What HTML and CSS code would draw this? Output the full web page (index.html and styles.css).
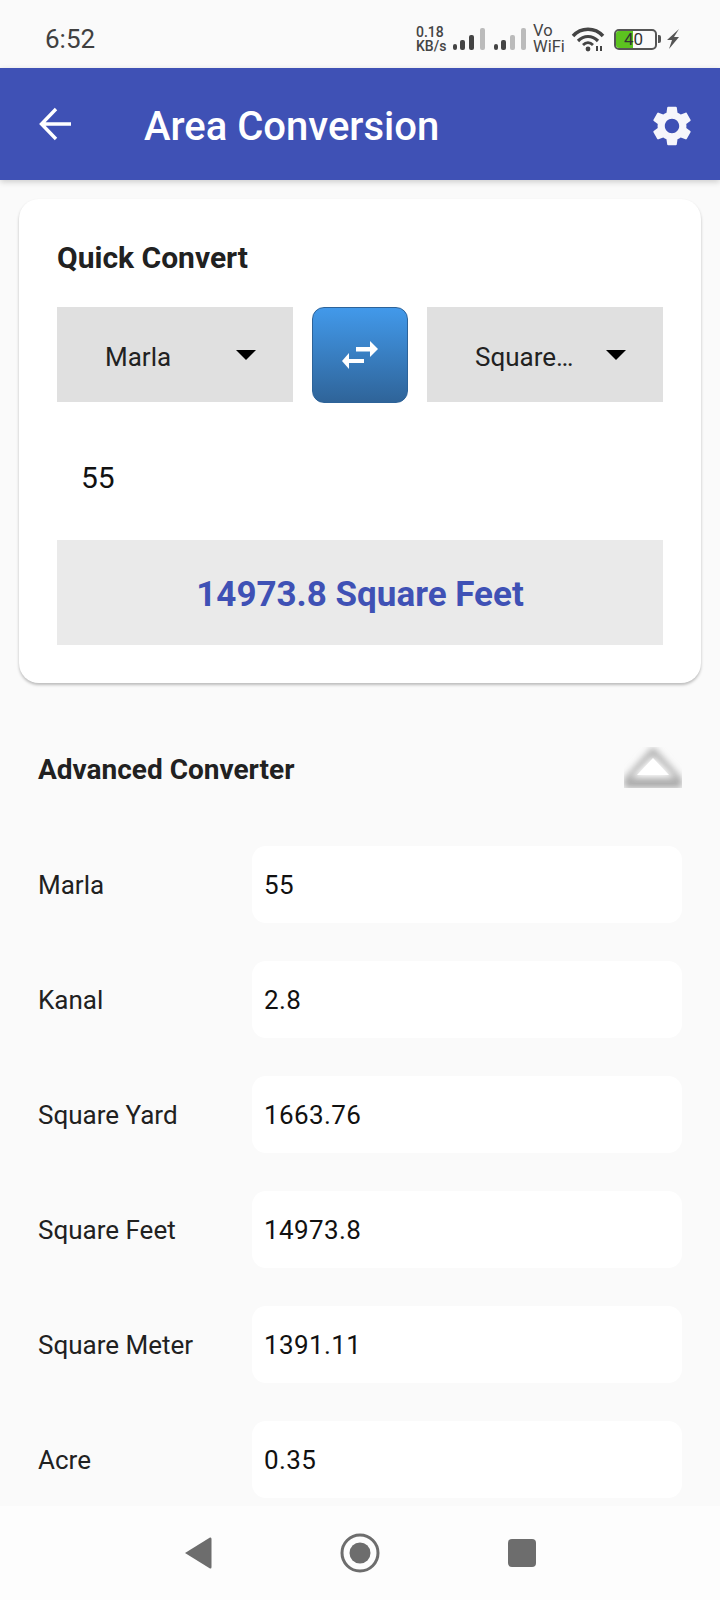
FILE: index.html
```html
<!DOCTYPE html>
<html lang="en">
  <head>
    <meta charset="UTF-8" />
    <meta name="viewport" content="width=device-width, initial-scale=1.0" />
    <title>Area Conversion</title>
    <link rel="stylesheet" href="styles.css">
  </head>
  <body>
    <div class="statusbar">
      <span class="time">6:52</span>
      <div class="status-icons">
        <div class="speed"><span>0.18</span><span>KB/s</span></div>
        <svg class="signal" width="33" height="24" viewBox="0 0 33 24">
          <rect x="0" y="17" width="4" height="6" rx="2" fill="#444" />
          <rect x="7" y="13" width="5" height="10" rx="2" fill="#444" />
          <rect x="16" y="8" width="5" height="15" rx="2" fill="#444" />
          <rect x="27" y="1" width="5" height="22" rx="2" fill="#bbb" />
        </svg>
        <svg class="signal signal-last" width="33" height="24" viewBox="0 0 33 24">
          <rect x="0" y="17" width="4" height="6" rx="2" fill="#444" />
          <rect x="7" y="13" width="5" height="10" rx="2" fill="#444" />
          <rect x="16" y="8" width="5" height="15" rx="2" fill="#bbb" />
          <rect x="27" y="1" width="5" height="22" rx="2" fill="#bbb" />
        </svg>
        <div class="vowifi"><span>Vo</span><span>WiFi</span></div>
        <svg class="wifi" width="34" height="26" viewBox="0 0 34 26">
          <path d="M2 10 C10 1 24 1 32 10" fill="none" stroke="#444" stroke-width="3.4" />
          <path d="M7 15 C13 9 21 9 27 15" fill="none" stroke="#444" stroke-width="3.2" />
          <path d="M12 19 C15 16 19 16 22 19" fill="none" stroke="#444" stroke-width="2.8" />
          <circle cx="17" cy="23" r="2.4" fill="#444" />
          <path d="M25 20 h2 v5 h-2 z M29 20 h2 v5 h-2 z" fill="#444" />
        </svg>
        <div class="battery">
          <div class="battery-body">
            <div class="battery-fill"></div>
            <span class="battery-level">40</span>
          </div>
          <div class="battery-nub"></div>
        </div>
        <svg class="bolt" width="14" height="20" viewBox="0 0 14 20">
          <path d="M13 0 L1 11 H6 L3 20 L13 8 H8 Z" fill="#555" />
        </svg>
      </div>
    </div>

    <div class="appbar">
      <svg class="back" width="34" height="34" viewBox="0 0 34 34">
        <path d="M32 17 H3 M17 2 L2.5 17 L17 32" fill="none" stroke="#fff" stroke-width="3.4" />
      </svg>
      <h1>Area Conversion</h1>
      <svg class="gear" width="48" height="48" viewBox="0 0 24 24">
        <path fill="#f6f6fb" d="M19.14 12.94c.04-.3.06-.61.06-.94 0-.32-.02-.64-.07-.94l2.03-1.58c.18-.14.23-.41.12-.61l-1.92-3.32c-.12-.22-.37-.29-.59-.22l-2.39.96c-.5-.38-1.03-.7-1.62-.94l-.36-2.54c-.04-.24-.24-.41-.48-.41h-3.84c-.24 0-.43.17-.47.41l-.36 2.54c-.59.24-1.13.57-1.62.94l-2.39-.96c-.22-.08-.47 0-.59.22L2.74 8.87c-.12.21-.08.47.12.61l2.03 1.58c-.05.3-.09.63-.09.94s.02.64.07.94l-2.03 1.58c-.18.14-.23.41-.12.61l1.92 3.32c.12.22.37.29.59.22l2.39-.96c.5.38 1.03.7 1.62.94l.36 2.54c.05.24.24.41.48.41h3.84c.24 0 .44-.17.47-.41l.36-2.54c.59-.24 1.13-.56 1.62-.94l2.39.96c.22.08.47 0 .59-.22l1.92-3.32c.12-.22.07-.47-.12-.61l-2.01-1.58zM12 15.6c-1.98 0-3.6-1.62-3.6-3.6s1.62-3.6 3.6-3.6 3.6 1.62 3.6 3.6-1.62 3.6-3.6 3.6z" />
      </svg>
    </div>

    <div class="content">
      <div class="card">
        <h2>Quick Convert</h2>
        <div class="convert-row">
          <div class="select">
            <span class="select-text">Marla</span>
            <span class="caret"></span>
          </div>
          <div class="swap">
            <svg width="36" height="28" viewBox="0 0 36 28">
              <path d="M14 6 H28 V0 L36 8 L28 16 V10.5 H14 Z M22 18 H7 V12 L0 20 L7 28 V22 H22 Z" fill="#fff" />
            </svg>
          </div>
          <div class="select">
            <span class="select-text">Square…</span>
            <span class="caret"></span>
          </div>
        </div>
        <div class="amount">55</div>
        <div class="result">14973.8 Square Feet</div>
      </div>

      <div class="advanced">
        <div class="advanced-head">
          <h3>Advanced Converter</h3>
          <svg class="collapse" width="58" height="41" viewBox="0 0 58 41">
            <defs>
              <filter id="soft" x="-20%" y="-20%" width="140%" height="140%">
                <feGaussianBlur stdDeviation="3.5" />
              </filter>
              <clipPath id="box"><rect width="58" height="41" /></clipPath>
            </defs>
            <g clip-path="url(#box)">
              <path d="M29 0 L58 32 V41 H0 V32 Z" fill="#a8a8a8" filter="url(#soft)" />
              <path d="M29 8 L52 31 H6 Z" fill="#fff" filter="url(#soft)" />
              <path d="M29 11 L45 28 H13 Z" fill="#fff" />
            </g>
          </svg>
        </div>
        <div class="unit-row"><span class="unit-name">Marla</span><div class="unit-value">55</div></div>
        <div class="unit-row"><span class="unit-name">Kanal</span><div class="unit-value">2.8</div></div>
        <div class="unit-row"><span class="unit-name">Square Yard</span><div class="unit-value">1663.76</div></div>
        <div class="unit-row"><span class="unit-name">Square Feet</span><div class="unit-value">14973.8</div></div>
        <div class="unit-row"><span class="unit-name">Square Meter</span><div class="unit-value">1391.11</div></div>
        <div class="unit-row"><span class="unit-name">Acre</span><div class="unit-value">0.35</div></div>
      </div>
    </div>

    <div class="navbar">
      <svg width="28" height="34" viewBox="0 0 28 34">
        <path d="M26 1.5 Q27.5 1 27.5 3 V31 Q27.5 33 26 32.5 L1 17 Z" fill="#6d6d6d" />
      </svg>
      <svg width="40" height="40" viewBox="0 0 40 40">
        <circle cx="20" cy="20" r="18" fill="none" stroke="#6d6d6d" stroke-width="3" />
        <circle cx="20" cy="20" r="10.5" fill="#6d6d6d" />
      </svg>
      <div class="nav-square"></div>
    </div>
  </body>
</html>
```

FILE: styles.css
```css
* {
  box-sizing: border-box;
}
html,
body {
  height: 100%;
}
body {
  font-family: Roboto, "Liberation Sans", sans-serif;
  background-color: #fafafa;
  color: #212121;
  margin: 0;
  padding: 0;
  display: flex;
  flex-direction: column;
  height: 1600px;
  overflow: hidden;
}
.statusbar {
  height: 68px;
  flex: none;
  display: flex;
  align-items: center;
  justify-content: space-between;
  padding: 10px 40px 0 45px;
  background-color: #fafafa;
}
.time {
  font-size: 26px;
  color: #404040;
}
.status-icons {
  display: flex;
  align-items: center;
  color: #444;
}
.speed {
  display: flex;
  flex-direction: column;
  font-size: 14px;
  font-weight: 500;
  line-height: 14px;
  width: 37px;
}
.signal {
  margin-right: 8px;
}
.signal-last {
  margin-right: 6px;
}
.vowifi {
  display: flex;
  flex-direction: column;
  font-size: 16.5px;
  line-height: 16px;
  width: 38px;
}
.wifi {
  margin-right: 9px;
}
.battery {
  display: flex;
  align-items: center;
  margin-right: 5px;
}
.battery-body {
  width: 43px;
  height: 21px;
  border: 2px solid #555;
  border-radius: 5px;
  position: relative;
  overflow: hidden;
  text-align: center;
}
.battery-fill {
  width: 17px;
  height: 100%;
  background-color: #5cc31f;
}
.battery-level {
  position: absolute;
  top: -1px;
  left: 8px;
  font-size: 17px;
  line-height: 19px;
  color: #333;
}
.battery-nub {
  width: 3px;
  height: 8px;
  margin-left: 1px;
  background-color: #555;
  border-radius: 0 2px 2px 0;
}
.appbar {
  height: 112px;
  flex: none;
  display: flex;
  align-items: center;
  padding: 0 24px 0 39px;
  background-color: #3f51b5;
  box-shadow: 0 2px 6px rgba(0, 0, 0, 0.18);
  position: relative;
}
.appbar h1 {
  margin: 0 0 0 71px;
  padding-top: 5px;
  flex: 1;
  color: white;
  font-size: 40px;
  font-weight: 500;
}
.gear {
  margin-top: 4px;
}
.content {
  flex: 1;
  overflow: hidden;
}
.card {
  margin: 19px 19px 0;
  height: 484px;
  padding: 38px 38px 0;
  background: white;
  border-radius: 20px;
  box-shadow: 0 2px 3px rgba(0, 0, 0, 0.25);
}
.card h2 {
  margin: 0;
  font-size: 30px;
  font-weight: 700;
  line-height: 42px;
}
.convert-row {
  display: flex;
  align-items: flex-start;
  gap: 19px;
  margin-top: 28px;
}
.select {
  width: 236px;
  height: 95px;
  display: flex;
  align-items: center;
  justify-content: space-between;
  padding: 4px 37px 0 48px;
  background-color: #e0e0e0;
  font-size: 26px;
  color: #222;
}
.caret {
  width: 0;
  height: 0;
  border-left: 10px solid transparent;
  border-right: 10px solid transparent;
  border-top: 10px solid black;
  margin-top: -4px;
}
.swap {
  width: 96px;
  height: 96px;
  flex: none;
  display: flex;
  align-items: center;
  justify-content: center;
  background: linear-gradient(#4299ea, #2f6499);
  border: 1px solid #2d6399;
  border-radius: 12px;
}
.amount {
  height: 137px;
  display: flex;
  align-items: center;
  padding: 11px 0 0 24px;
  font-size: 30px;
  color: #111;
}
.result {
  height: 105px;
  display: flex;
  align-items: center;
  justify-content: center;
  padding-top: 3px;
  background-color: #eaeaea;
  color: #3f51b5;
  font-size: 35px;
  font-weight: 700;
}
.advanced {
  padding: 0 38px;
}
.advanced-head {
  display: flex;
  align-items: center;
  justify-content: space-between;
  height: 41px;
  margin-top: 64px;
  margin-bottom: 58px;
}
.advanced-head h3 {
  margin: 0;
  padding-top: 4px;
  font-size: 28px;
  font-weight: 700;
}
.unit-row {
  display: flex;
  align-items: center;
  height: 77px;
  margin-bottom: 38px;
  font-size: 26px;
}
.unit-name {
  width: 214px;
  flex: none;
  padding-top: 1px;
}
.unit-value {
  flex: 1;
  height: 77px;
  display: flex;
  align-items: center;
  padding: 1px 0 0 12px;
  background: white;
  border-radius: 14px;
  color: #111;
  letter-spacing: 0.4px;
}
.navbar {
  height: 94px;
  flex: none;
  display: flex;
  align-items: center;
  justify-content: center;
  gap: 128px;
  background-color: #fdfdfd;
}
.nav-square {
  width: 28px;
  height: 28px;
  background-color: #6d6d6d;
  border-radius: 4px;
}
```
